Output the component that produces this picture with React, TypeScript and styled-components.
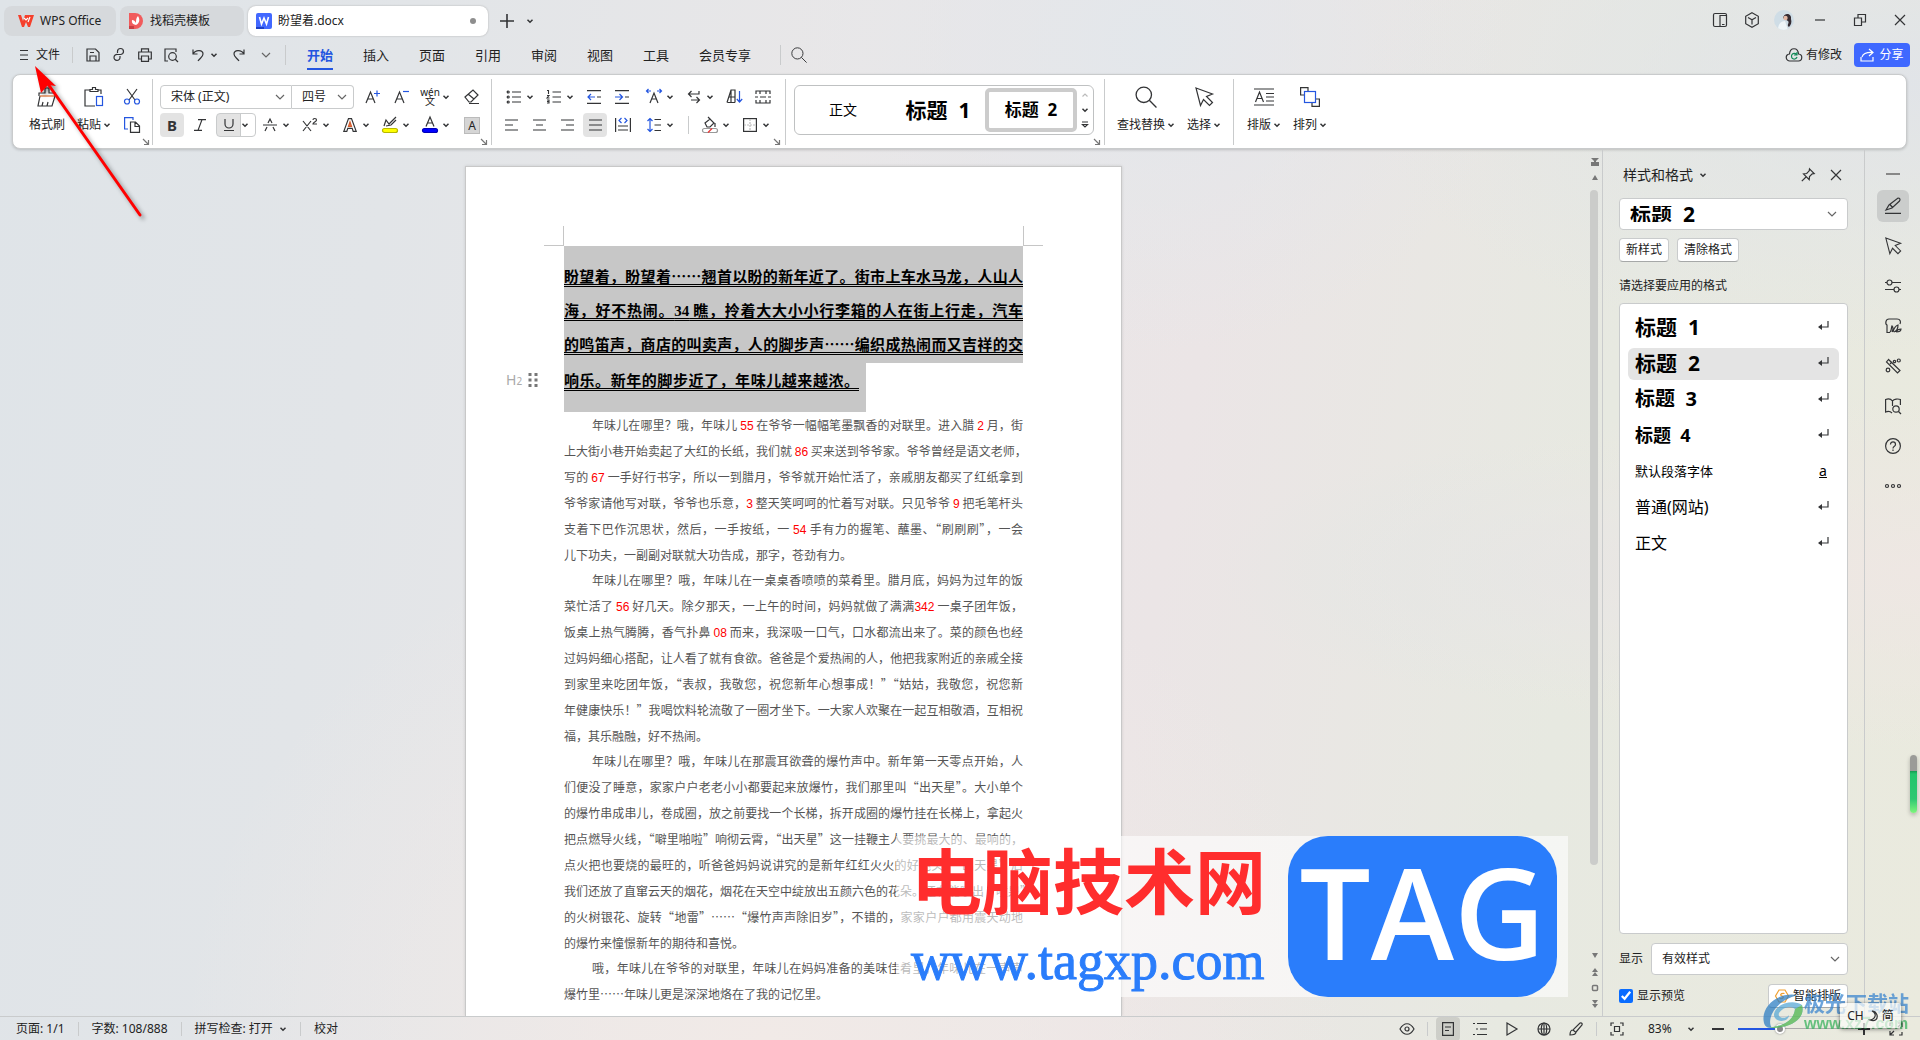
import React, { ReactNode } from "react";
import styled, { createGlobalStyle, css } from "styled-components";

const ui = `"Noto Sans", "Noto Sans CJK SC", sans-serif`;
const ink = "#333436";
const blue = "#2456e0";
const line = "#c9cbcc";

const Global = createGlobalStyle`
  * { box-sizing: border-box; }
  body { margin: 0; font-family: ${ui}; font-size: 12px; line-height: 16px; color: #222; }
  button, select, input { font: inherit; color: inherit; margin: 0; }
  button { border: 0; background: none; padding: 0; cursor: default; }
  p, h1, h2, ul { margin: 0; padding: 0; }
`;

/* ---------- icons ---------- */
const Svg = styled.svg<{ $w: number; $h: number }>`
  width: ${(p) => p.$w}px;
  height: ${(p) => p.$h}px;
  flex: none;
  display: block;
  fill: none;
  stroke: ${ink};
  stroke-width: 1.2;
  overflow: visible;
`;
type IcoProps = { children: ReactNode; w?: number; h?: number; box?: string };
const Ico = ({ children, w = 20, h = w, box }: IcoProps) => (
  <Svg $w={w} $h={h} viewBox={box ?? `0 0 ${w} ${h}`} aria-hidden="true">
    {children}
  </Svg>
);
const Chev = () => (
  <Ico w={8}>
    <path d="M1.5 2.8 4 5.2 6.5 2.8" strokeWidth="1.5" />
  </Ico>
);
const WideChev = () => (
  <Ico w={12}>
    <path d="M2 4l4 4 4-4" stroke="#666" />
  </Ico>
);
const Launch = () => (
  <Ico w={8}>
    <path d="M1 1l5 5M6.5 2v4.5H2" stroke="#777" />
  </Ico>
);
const X = () => (
  <Ico w={12}>
    <path d="M1 1l10 10M11 1 1 11" />
  </Ico>
);
const Cursor = ({ s = 20 }: { s?: number }) => (
  <Ico w={s} box="0 0 20 20">
    <path d="M2 1l16.500 6-6 2.500 6 6-3 3-6-6-3 6z" />
  </Ico>
);
const Search = ({ s = 16 }: { s?: number }) => (
  <Ico w={s} box="0 0 20 20">
    <circle cx="8" cy="8" r="7" />
    <path d="M13 13l6.500 6.500" />
  </Ico>
);
const Return = () => (
  <Ico w={12}>
    <path d="M11 0v6H2" />
    <path d="M5 3 1 6l4 3z" fill={ink} stroke="none" />
  </Ico>
);

/* ---------- shell ---------- */
const Shell = styled.div`
  height: 100vh;
  display: flex;
  flex-direction: column;
  overflow: hidden;
  position: relative;
  background:
    radial-gradient(ellipse at 100% 55%, #eee7e3 0, transparent 22%),
    radial-gradient(ellipse at 99% 8%, #e1e4e8 0, transparent 20%),
    radial-gradient(ellipse at 60% 4%, #e3e7eb 0, transparent 22%),
    radial-gradient(ellipse at 82% 55%, #e3e6e5 0, transparent 16%),
    radial-gradient(ellipse at 40% 100%, #f1eae7 0, transparent 36%),
    linear-gradient(100deg, #dfe4e8 0, #e2e5e8 20%, #e9e7e8 42%, #ebe5e6 60%, #e7e9e1 80%, #eaeade 100%);
`;
const TitleBar = styled.header`
  display: flex;
  height: 36px;
  padding: 6px 14px 0 4px;
  gap: 4px;
`;
const Tab = styled.button<{ $on?: boolean; $w: number }>`
  width: ${(p) => p.$w}px;
  height: 30px;
  border-radius: 8px;
  padding: 0 12px 0 8px;
  display: flex;
  align-items: center;
  gap: 6px;
  background: ${(p) => (p.$on ? "#fff" : "#d6d9dc")};
  box-shadow: ${(p) => (p.$on ? "0 0 2px #aaa" : "none")};
`;
const Dot = styled.i`
  width: 6px;
  height: 6px;
  border-radius: 3px;
  background: #8e8e8e;
  margin-left: auto;
`;
const Grow = styled.div`
  flex: 1;
`;
const Gap = styled.div<{ $w: number }>`
  width: ${(p) => p.$w}px;
  flex: none;
`;
const Cell = styled.button<{ $w?: number; $on?: boolean; $h?: number }>`
  width: ${(p) => p.$w ?? 24}px;
  height: ${(p) => p.$h ?? 24}px;
  flex: none;
  display: flex;
  align-items: center;
  justify-content: center;
  border-radius: 4px;
  background: ${(p) => (p.$on ? "rgba(0, 0, 0, 0.11)" : "none")};
`;
const Avatar = styled.span`
  width: 20px;
  height: 20px;
  border-radius: 10px;
  overflow: hidden;
  background: #cfdde6;
`;
const Divider = styled.i<{ $h: number; $m?: number }>`
  width: 1px;
  height: ${(p) => p.$h}px;
  margin: 0 ${(p) => p.$m ?? 0}px;
  background: ${line};
  flex: none;
`;
const MenuBar = styled.nav`
  height: 38px;
  display: flex;
  align-items: center;
  padding: 0 10px 0 18px;
`;
const FileBtn = styled.button`
  display: flex;
  align-items: center;
  gap: 6px;
  width: 54px;
`;
const MenuTab = styled.button<{ $on?: boolean }>`
  height: 28px;
  margin: 2px 15px 0;
  font-size: 13px;
  white-space: nowrap;
  border-bottom: 2px solid ${(p) => (p.$on ? blue : "transparent")};
  color: ${(p) => (p.$on ? blue : "#222")};
  font-weight: ${(p) => (p.$on ? 700 : 400)};
`;
const Changed = styled.button`
  display: flex;
  align-items: center;
  gap: 4px;
  margin-right: 12px;
`;
const Share = styled.button`
  display: flex;
  align-items: center;
  justify-content: center;
  gap: 5px;
  width: 56px;
  height: 24px;
  border-radius: 4px;
  background: #3f68ff;
  color: #fff;
`;

/* ---------- ribbon ---------- */
const Ribbon = styled.section`
  margin: 0 13px 0 12px;
  height: 75px;
  flex: none;
  background: #fff;
  border: 1px solid ${line};
  border-radius: 8px;
  box-shadow: 0 1px 3px rgba(0, 0, 0, 0.18);
  display: flex;
  align-items: center;
`;
const Group = styled.div<{ $l: number; $r?: number }>`
  display: flex;
  flex-direction: column;
  height: 73px;
  padding: 10px ${(p) => p.$r ?? 3}px 0 ${(p) => p.$l}px;
`;
const Rows = styled.div`
  display: grid;
  row-gap: 4px;
`;
const Row = styled.div`
  display: flex;
  height: 24px;
  align-items: center;
`;
const LaunchBtn = styled.button`
  align-self: flex-end;
  width: 8px;
  height: 8px;
  margin-top: 1px;
`;
const Big = styled.button<{ $w?: number }>`
  width: ${(p) => (p.$w ? p.$w + "px" : "auto")};
  display: grid;
  grid-template-rows: 24px 24px;
  row-gap: 4px;
  place-items: center;
  justify-content: center;
`;
const BigLabel = styled.span`
  display: flex;
  align-items: center;
  gap: 2px;
  white-space: nowrap;
`;
const BigRow = styled.div<{ $gap: number }>`
  display: flex;
  gap: ${(p) => p.$gap}px;
`;
const Split = styled.button<{ $box?: boolean }>`
  width: 40px;
  height: 24px;
  flex: none;
  display: flex;
  align-items: center;
  padding-left: 2px;
  ${(p) =>
    p.$box &&
    css`
      border: 1px solid ${line};
      border-radius: 4px;
      padding-left: 0;
      background: linear-gradient(90deg, #e3e3e3 23px, ${line} 23px, ${line} 24px, #fff 24px);
    `}
`;
const SplitFace = styled.span`
  width: 24px;
  display: flex;
  justify-content: center;
`;
const Drop = ({ children, label, box }: { children: ReactNode; label: string; box?: boolean }) => (
  <Split aria-label={label} $box={box}>
    <SplitFace>{children}</SplitFace>
    <Chev />
  </Split>
);
const Pick = styled.div<{ $w?: number; $h?: number; $join?: "l" | "r"; $end?: number }>`
  display: grid;
  align-items: center;
  width: ${(p) => (p.$w ? p.$w + "px" : "auto")};
  height: ${(p) => p.$h ?? 24}px;
  flex: ${(p) => (p.$w ? "none" : 1)};
  background: #fff;
  border: 1px solid ${line};
  border-radius: ${(p) => (p.$join === "l" ? "4px 0 0 4px" : p.$join === "r" ? "0 4px 4px 0" : "4px")};
  border-left-width: ${(p) => (p.$join === "r" ? 0 : 1)}px;
  > * {
    grid-area: 1 / 1;
  }
  > svg {
    justify-self: end;
    margin-right: ${(p) => p.$end ?? 5}px;
    pointer-events: none;
  }
`;
const Select = styled.select<{ $pad?: number; $big?: boolean }>`
  appearance: none;
  width: 100%;
  height: 100%;
  border: 0;
  background: none;
  padding: 0 20px 0 ${(p) => p.$pad ?? 10}px;
  font-size: ${(p) => (p.$big ? 21 : 12)}px;
  font-weight: ${(p) => (p.$big ? 700 : 400)};
  color: ${(p) => (p.$big ? "#000" : "#222")};
  white-space: pre;
`;
const Gallery = styled.div`
  width: 300px;
  height: 50px;
  margin-bottom: 2px;
  border: 1px solid #bfc1c2;
  border-radius: 6px;
  display: flex;
  align-items: center;
`;
const Style = styled.button<{ $w: number; $size: number; $on?: boolean; $bold?: boolean }>`
  width: ${(p) => p.$w}px;
  height: 44px;
  font-size: ${(p) => p.$size}px;
  font-weight: ${(p) => (p.$bold ? 700 : 400)};
  font-family: ${ui};
  color: #000;
  white-space: pre;
  line-height: 24px;
  border: 4px solid ${(p) => (p.$on ? "#ccc" : "transparent")};
  border-radius: 5px;
`;
const Spin = styled.div`
  flex: 1;
  display: grid;
  justify-items: center;
  gap: 8px;
`;

/* ---------- workspace ---------- */
const Work = styled.main`
  flex: 1;
  min-height: 0;
  display: flex;
`;
const Canvas = styled.div`
  flex: 1;
  min-width: 0;
  overflow: hidden;
  display: flex;
  flex-direction: column;
  align-items: center;
  padding: 17px 1px 0 0;
`;
const Page = styled.article`
  width: 657px;
  flex: 1;
  background: #fff;
  border: 1px solid #c8c8c8;
  border-bottom: 0;
  padding: 59px 98px 0;
  box-shadow: 0 0 3px rgba(0, 0, 0, 0.12);
  font-family: "Noto Sans CJK SC", sans-serif;
`;
const Corners = styled.div`
  display: flex;
  justify-content: space-between;
  margin: 0 -20px;
`;
const Corner = styled.i<{ $side: "left" | "right" }>`
  width: 20px;
  height: 20px;
  border: 0 solid #c6c6c6;
  border-bottom-width: 1px;
  border-${(p) => (p.$side === "left" ? "right" : "left")}-width: 1px;
`;
const Heading = styled.h1`
  font-size: 15px;
  line-height: 34px;
  font-weight: 700;
  color: #000;
`;
const Selected = styled.span<{ $tail?: boolean }>`
  display: block;
  position: relative;
  background: #c7c7c7;
  ${(p) =>
    p.$tail
      ? css`
          width: 302px;
          height: 49px;
          padding-right: 7px;
        `
      : css`
          padding: 13px 0 2px;
        `}
`;
const HLine = styled.span`
  display: block;
  white-space: nowrap;
  text-align: justify;
  text-align-last: justify;
  text-decoration: underline double 1px;
  text-decoration-skip-ink: none;
  text-underline-offset: 2px;
`;
const Handle = styled.span`
  position: absolute;
  left: -58px;
  top: 8px;
  display: flex;
  align-items: center;
  gap: 6px;
  font: 400 14px/18px ${ui};
  color: #aaa;
  sub {
    font-size: 10px;
    line-height: 1;
    vertical-align: baseline;
  }
`;
const Para = styled.p`
  font-size: 12px;
  line-height: 26px;
  color: #555;
  & + & {
    margin-top: -1px;
  }
`;
const PLine = styled.span<{ $first: boolean; $last: boolean }>`
  display: block;
  height: 26px;
  white-space: nowrap;
  padding-left: ${(p) => (p.$first ? 28 : 0)}px;
  text-align-last: ${(p) => (p.$last ? "left" : "justify")};
`;
const Num = styled.span<{ $serif?: boolean }>`
  font-family: ${(p) => (p.$serif ? `"Liberation Serif", serif` : `"Liberation Sans", sans-serif`)};
  color: ${(p) => (p.$serif ? "inherit" : "#f00")};
  line-height: 1;
`;
const ScrollCol = styled.div`
  width: 14px;
  display: flex;
  flex-direction: column;
  padding: 5px 0 4px;
`;
const Track = styled.div`
  flex: 1;
  padding: 4px 2px 0;
`;
const Thumb = styled.div`
  width: 8px;
  height: 89%;
  border-radius: 4px;
  background: #cbccca;
`;
const Panel = styled.aside`
  width: 262px;
  border-left: 1px solid ${line};
  padding: 0 16px 8px;
  display: flex;
  flex-direction: column;
`;
const PanelHead = styled.div`
  height: 49px;
  padding: 3px 0 0 4px;
  display: flex;
  align-items: center;
  gap: 6px;
  font-size: 14px;
`;
const PanelRow = styled.div<{ $gap: number; $top: number }>`
  display: flex;
  align-items: center;
  gap: ${(p) => p.$gap}px;
  margin-top: ${(p) => p.$top}px;
`;
const Plain = styled.button`
  height: 24px;
  padding: 0 6px;
  display: flex;
  align-items: center;
  gap: 4px;
  background: #fff;
  border: 1px solid ${line};
  border-bottom-color: #a6a8a8;
  border-radius: 4px;
  white-space: nowrap;
`;
const Hint = styled.p`
  padding: 16px 0 9px;
`;
const List = styled.ul`
  flex: 1;
  list-style: none;
  background: #fff;
  border: 1px solid ${line};
  border-radius: 4px;
  padding: 8px;
  display: flex;
  flex-direction: column;
  gap: 4px;
`;
const Entry = styled.button<{ $on?: boolean; $size: number; $bold?: boolean }>`
  width: 100%;
  height: 32px;
  padding: 0 10px 2px 7px;
  display: flex;
  align-items: center;
  justify-content: space-between;
  border-radius: 6px;
  background: ${(p) => (p.$on ? "#e4e4e4" : "none")};
  font-size: ${(p) => p.$size}px;
  font-weight: ${(p) => (p.$bold ? 700 : 400)};
  line-height: 28px;
  color: #000;
  white-space: pre;
`;
const CharMark = styled.span`
  width: 12px;
  font-size: 14px;
  text-align: center;
  text-decoration: underline;
`;
const Check = styled.label`
  display: flex;
  align-items: center;
  gap: 4px;
  flex: 1;
  input {
    width: 14px;
    height: 14px;
    accent-color: #0a6cff;
  }
`;
const Rail = styled.aside`
  width: 56px;
  border-left: 1px solid ${line};
  display: flex;
  flex-direction: column;
  align-items: center;
  gap: 8px;
  padding-top: 17px;
`;
const RailBtn = styled.button<{ $on?: boolean; $h?: number }>`
  width: 32px;
  height: ${(p) => p.$h ?? 32}px;
  border-radius: 6px;
  background: ${(p) => (p.$on ? "#cbcdcc" : "none")};
  display: grid;
  place-items: center;
`;

/* ---------- status bar ---------- */
const Status = styled.footer`
  height: 24px;
  border-top: 1px solid ${line};
  display: flex;
  align-items: center;
  padding: 0 12px 0 16px;
  white-space: nowrap;
`;
const StatusBtn = styled.button`
  display: flex;
  align-items: center;
  gap: 6px;
`;
const Zoom = styled.input`
  appearance: none;
  width: 114px;
  margin: 0 0 0 8px;
  height: 10px;
  background: linear-gradient(${blue}, ${blue}) 0 50% / 40px 2px no-repeat, linear-gradient(#aaa, #aaa) 0 50% / 100% 1px no-repeat;
  &::-webkit-slider-thumb {
    appearance: none;
    width: 10px;
    height: 10px;
    border-radius: 5px;
    background: #888;
    border: 2px solid #fff;
    box-shadow: 0 0 2px #777;
  }
`;
const Percent = styled.span`
  width: 26px;
  margin: 0 11px 0 19px;
`;

/* ---------- overlays ---------- */
const Arrow = styled.svg`
  position: absolute;
  left: 28px;
  top: 60px;
  width: 130px;
  height: 170px;
  pointer-events: none;
  filter: drop-shadow(3px 3px 2px rgba(0, 0, 0, 0.4));
`;
const Meter = styled.div`
  position: absolute;
  right: 3px;
  top: 755px;
  width: 7px;
  height: 58px;
  border-radius: 4px;
  background: linear-gradient(#9b9b98 16px, #159a52 16px, #22c56b 19px, #2ec872 44px, #7ef57c);
  box-shadow: 0 2px 4px rgba(0, 0, 0, 0.25);
`;
const SiteMark = styled.div`
  position: absolute;
  left: 896px;
  top: 836px;
  height: 161px;
  padding-right: 11px;
  display: flex;
  gap: 21px;
  background: rgba(255, 255, 255, 0.6);
  pointer-events: none;
`;
const SiteText = styled.div`
  padding-left: 15px;
  width: 371px;
  white-space: nowrap;
`;
const SiteName = styled.div`
  font: 700 71px/82px "Noto Sans CJK SC", sans-serif;
  color: #ff2d2d;
`;
const SiteUrl = styled.div`
  font: 400 54px/86px "Liberation Serif", serif;
  color: #2a7dfb;
  -webkit-text-stroke: 1px #2a7dfb;
`;
const Tag = styled.div`
  width: 269px;
  border-radius: 40px;
  background: #2a7dfb;
  color: #fff;
  font: 600 126px/150px "Open Sans", sans-serif;
  text-align: center;
`;
const Ime = styled.div`
  position: absolute;
  right: 19px;
  bottom: 12px;
  width: 61px;
  height: 25px;
  display: flex;
  align-items: center;
  justify-content: center;
  gap: 3px;
  background: rgba(252, 252, 250, 0.7);
  border-radius: 3px;
  box-shadow: 0 1px 4px rgba(0, 0, 0, 0.5);
`;
const Dl = styled.div`
  position: absolute;
  right: 11px;
  bottom: 7px;
  display: flex;
  align-items: center;
  opacity: 0.75;
  pointer-events: none;
  white-space: nowrap;
`;
const DlName = styled.div`
  font: 700 21px/26px "Noto Sans CJK SC", sans-serif;
  color: #3c86cf;
`;
const DlUrl = styled.div`
  font: 700 16px/18px "Liberation Sans", sans-serif;
  color: #3bb35f;
`;

/* ---------- content ---------- */
const headingLines = [
  "盼望着，盼望着……翘首以盼的新年近了。街市上车水马龙，人山人",
  "海，好不热闹。34 瞧，拎着大大小小行李箱的人在街上行走，汽车",
  "的鸣笛声，商店的叫卖声，人的脚步声……编织成热闹而又吉祥的交",
];
const paragraphs = [
  [
    "年味儿在哪里？哦，年味儿 55 在爷爷一幅幅笔墨飘香的对联里。进入腊 2 月，街",
    "上大街小巷开始卖起了大红的长纸，我们就 86 买来送到爷爷家。爷爷曾经是语文老师，",
    "写的 67 一手好行书字，所以一到腊月，爷爷就开始忙活了，亲戚朋友都买了红纸拿到",
    "爷爷家请他写对联，爷爷也乐意，3 整天笑呵呵的忙着写对联。只见爷爷 9 把毛笔杆头",
    "支着下巴作沉思状，然后，一手按纸，一 54 手有力的握笔、蘸墨、“刷刷刷”，一会",
    "儿下功夫，一副副对联就大功告成，那字，苍劲有力。",
  ],
  [
    "年味儿在哪里？哦，年味儿在一桌桌香喷喷的菜肴里。腊月底，妈妈为过年的饭",
    "菜忙活了 56 好几天。除夕那天，一上午的时间，妈妈就做了满满342 一桌子团年饭，",
    "饭桌上热气\u817e\u817e，香气扑鼻 08 而来，我深吸一口气，口水都流出来了。菜的颜色也经",
    "过妈妈细心搭配，让人看了就有食欲。爸爸是个爱热闹的人，他把我家附近的亲戚全接",
    "到家里来吃团年饭，“表叔，我敬您，祝您新年心想事成！”“姑姑，我敬您，祝您新",
    "年健康快乐！”我喝饮料轮流敬了一圈才坐下。一大家人欢聚在一起互相敬酒，互相祝",
    "福，其乐融融，好不热闹。",
  ],
  [
    "年味儿在哪里？哦，年味儿在那震耳欲聋的爆竹声中。新年第一天零点开始，人",
    "们便没了睡意，家家户户老老小小都要起来放爆竹，我们那里叫“出天星”。大小单个",
    "的爆竹串成串儿，卷成圈，放之前要找一个长梯，拆开成圈的爆竹挂在长梯上，拿起火",
    "把点燃导火线，“噼里啪啦”响彻云霄，“出天星”这一挂鞭主人要挑最大的、最响的，",
    "点火把也要烧的最旺的，听爸爸妈妈说讲究的是新年红红火火的好兆头。“出天星”后",
    "我们还放了直窜云天的烟花，烟花在天空中绽放出五颜六色的花朵。还有能喷出“喷泉”",
    "的火树银花、旋转“地雷”……“爆竹声声除旧岁”，不错的，家家户户都用震天动地",
    "的爆竹来憧憬新年的期待和喜悦。",
  ],
  ["哦，年味儿在爷爷的对联里，年味儿在妈妈准备的美味佳肴里，年味儿在一声声", "爆竹里……年味儿更是深深地烙在了我的记忆里。"],
];
const withNumbers = (t: string, serif = false) =>
  t.split(/(\d+)/).map((s, i) =>
    i % 2 ? (
      <Num key={i} $serif={serif}>
        {s}
      </Num>
    ) : (
      s
    )
  );

const styles: { name: string; size: number; bold?: boolean; mark?: string }[] = [
  { name: "标题  1", size: 21, bold: true },
  { name: "标题  2", size: 21, bold: true },
  { name: "标题  3", size: 20, bold: true },
  { name: "标题  4", size: 18, bold: true },
  { name: "默认段落字体", size: 13, mark: "a" },
  { name: "普通(网站)", size: 16 },
  { name: "正文", size: 16 },
];

const Glyph = styled.span`
  font-family: "Noto Sans", sans-serif;
  font-size: 15px;
  font-weight: 700;
  line-height: 18px;
  color: ${ink};
`;
const Pinyin = styled.span`
  display: grid;
  justify-items: center;
  font-size: 10px;
  line-height: 9px;
`;
const Shade = styled.span`
  width: 16px;
  height: 17px;
  display: grid;
  place-items: center;
  background: #d5d5d5;
  border: 1px solid #bbb;
  font-size: 12px;
`;

const align: [string, string, string][] = [
  ["左对齐", "M0 1h13M0 6h8M0 11h13", "l"],
  ["居中", "M0 1h13M3 6h7M0 11h13", "c"],
  ["右对齐", "M0 1h13M5 6h8M0 11h13", "r"],
  ["两端对齐", "M0 1h13M0 6h13M0 11h13", "j"],
];

const Centre = styled.span`
  width: 28px;
  display: flex;
  justify-content: center;
`;

function ClipboardGroup() {
  return (
    <Group $l={13} $r={2}>
      <BigRow $gap={5}>
        <Big $w={42}>
          <Ico>
            <path d="M2 9V6h6V1h4v5h6v3M3 9 1 19h14l3-10M5 19l1-4M10 19l1-4" />
            <path d="M3 9h14" stroke="#e2702e" />
          </Ico>
          <BigLabel>格式刷</BigLabel>
        </Big>
        <Big $w={42}>
          <Ico>
            <path d="M6 3H1v16h10M14 3h3v4M6 4.500V2.500h2.500v-2h3v2H14v2z" />
            <rect x="12.500" y="9.500" width="6" height="9" stroke={blue} />
          </Ico>
          <BigLabel>
            粘贴
            <Chev />
          </BigLabel>
        </Big>
        <Rows>
          <Cell aria-label="剪切">
            <Ico w={16}>
              <path d="M3 0l8 11M13 0 5 11" />
              <circle cx="3" cy="12.500" r="2.500" stroke={blue} />
              <circle cx="13" cy="12.500" r="2.500" stroke={blue} />
            </Ico>
          </Cell>
          <Cell aria-label="复制">
            <Ico w={16}>
              <path d="M6.500 5h5l4 4v6.400h-9zM11 5v4.500h4" />
              <path d="M4 12H.6V.6H9V3" stroke={blue} />
            </Ico>
          </Cell>
        </Rows>
        <Gap $w={1} />
      </BigRow>
      <LaunchBtn aria-label="剪贴板选项">
        <Launch />
      </LaunchBtn>
    </Group>
  );
}

export default function App() {
  return (
    <Shell>
      <Global />
      <TitleBar>
        <Tab $w={112}>
          <Gap $w={0} />
          <Ico w={16}>
            <path d="M0 2h3l2 6 2-6h9l-4 12h-2L8 9l-2 5H4z" fill="#f5402c" stroke="none" />
            <path d="M6 5l2 2 2-2M10 9l2-5" stroke="#fff" strokeWidth="1.200" />
          </Ico>
          WPS Office
        </Tab>
        <Tab $w={124}>
          <Ico w={16}>
            <path d="M1 0h6a8 8 0 0 1 0 16H1z" fill="#f15b5c" stroke="none" />
            <path d="M1 13h5v3H1z" fill="#c93e43" stroke="none" />
            <path d="M8 12c-5-1-4-4-4-5 2 0 3 1 4 3 0-3 0-5 2-7 2 3 2 7-2 9z" fill="#fff" stroke="none" />
          </Ico>
          找稻壳模板
        </Tab>
        <Tab $w={240} $on>
          <Ico w={16}>
            <rect width="16" height="16" rx="2" fill="#4268ff" stroke="none" />
            <path d="M0 14h8v2H0z" fill="#1d3fc4" stroke="none" />
            <path d="M3.500 4l2 7L8 5l2.500 6 2-7" stroke="#fff" strokeWidth="1.600" />
          </Ico>
          盼望着.docx
          <Dot />
        </Tab>
        <Cell $w={30} $h={30} aria-label="新建">
          <Ico w={14}>
            <path d="M7 0v14M0 7h14" strokeWidth="1.600" />
          </Ico>
        </Cell>
        <Cell $w={8} $h={30} aria-label="标签列表">
          <Chev />
        </Cell>
        <Grow />
        <Cell $w={28} $h={28} aria-label="侧栏">
          <Ico w={14}>
            <rect x="0.5" y="0.5" width="13" height="13" rx="1.500" />
            <path d="M7 14V2.500h6.500M9 11.500h2.500" />
          </Ico>
        </Cell>
        <Cell $w={28} $h={28} aria-label="应用">
          <Ico w={14} h={16}>
            <path d="M7 .8l6.300 3.500v7.400L7 15.200.7 11.700V4.300zM3 5.500l4 2.300 4-2.300M7 8v4.500" />
          </Ico>
        </Cell>
        <Cell $w={28} $h={28} aria-label="账户">
          <Avatar>
            <Ico>
              <path d="M4 20c0-6 3-9 7-9l3 9z" fill="#eff5f8" stroke="none" />
              <path d="M9 8c1-6 9-5 8 1 1 3 0 6-2 8-3-2 1-4-1-6z" fill="#352c33" stroke="none" />
              <circle cx="11.500" cy="8" r="2.200" fill="#e4b9a6" stroke="none" />
            </Ico>
          </Avatar>
        </Cell>
        <Cell $w={36} $h={28} aria-label="最小化">
          <Ico w={10}>
            <path d="M0 5h10" />
          </Ico>
        </Cell>
        <Cell $w={36} $h={28} aria-label="还原">
          <Ico w={12}>
            <path d="M.5 4h7v7.500h-7zM4 4V.5h7.500V8H7.500" />
          </Ico>
        </Cell>
        <Gap $w={8} />
        <Cell $w={12} $h={28} aria-label="关闭">
          <X />
        </Cell>
      </TitleBar>

      <MenuBar>
        <FileBtn>
          <Ico w={12}>
            <path d="M2 1.500h8M2 6h8M2 10.500h8" />
          </Ico>
          文件
        </FileBtn>
        <Divider $h={16} />
        <Gap $w={7} />
        <Cell $w={26} aria-label="保存">
          <Ico w={14}>
            <path d="M1 1h8.500L13 4.500V13H1zM4 13V8h6v5M4 4.500h4" />
          </Ico>
        </Cell>
        <Cell $w={26} aria-label="输出">
          <Ico w={14}>
            <path d="M5.500 5V3.500a3 3 0 1 1 3 3h-3a3 3 0 1 0 2.500 3V8" />
          </Ico>
        </Cell>
        <Cell $w={26} aria-label="打印">
          <Ico w={14}>
            <path d="M3.500 4V.8h7V4M3.500 11H.7V4h12.600v7h-2.800M3.500 8h7v5.300h-7z" />
          </Ico>
        </Cell>
        <Cell $w={26} aria-label="打印预览">
          <Ico w={14}>
            <path d="M4 13H1V1h11v3" />
            <circle cx="8.500" cy="8.500" r="3.800" />
            <path d="M11 11l3 3" />
          </Ico>
        </Cell>
        <Drop label="撤销">
          <Ico w={14}>
            <path d="M2 1.500V6h4.500M2 6c3-5 10-4 10 0 0 3-3 4-5 7" />
          </Ico>
        </Drop>
        <Cell $w={30} aria-label="恢复">
          <Ico w={14}>
            <path d="M12 1.500V6H7.500M12 6C9 1 2 2 2 6c0 3 3 4 5 7" />
          </Ico>
        </Cell>
        <Cell $w={24} aria-label="更多">
          <WideChev />
        </Cell>
        <Gap $w={7} />
        <Divider $h={20} />
        <Gap $w={6} />
        {["开始", "插入", "页面", "引用", "审阅", "视图", "工具", "会员专享"].map((t) => (
          <MenuTab key={t} $on={t === "开始"}>
            {t}
          </MenuTab>
        ))}
        <Gap $w={14} />
        <Divider $h={20} />
        <Gap $w={6} />
        <Cell aria-label="搜索">
          <Search />
        </Cell>
        <Grow />
        <Changed>
          <Ico w={16}>
            <path d="M4 14a3.500 3.500 0 0 1-.5-7C4 0 12 0 12.500 7a3.500 3.500 0 0 1-.5 7z" />
            <path d="M10.500 7.500A2.800 2.800 0 1 0 11 10M11 5v3H8" stroke="#128a58" />
          </Ico>
          有修改
        </Changed>
        <Share>
          <Ico w={14}>
            <path d="M9 1l4 3.500L9 8M13 4.500C6 4 3 6 2 9M1 9v4h12V9" stroke="#fff" />
          </Ico>
          分享
        </Share>
      </MenuBar>

      <Ribbon>
        <ClipboardGroup />
        <Divider $h={66} />

        <Group $l={7}>
          <Rows>
            <Row>
              <Pick $w={132} $join="l">
                <Select aria-label="字体">
                  <option>宋体 (正文)</option>
                </Select>
                <WideChev />
              </Pick>
              <Pick $w={62} $join="r">
                <Select aria-label="字号">
                  <option>四号</option>
                </Select>
                <WideChev />
              </Pick>
              <Gap $w={4} />
              <Cell $w={29} aria-label="增大字号">
                <Ico w={14}>
                  <path d="M0 13 4.500 2 9 13M1.500 9h6" />
                  <path d="M8 3.500h6M11 .5v6" stroke={blue} />
                </Ico>
              </Cell>
              <Cell $w={29} aria-label="减小字号">
                <Ico w={14}>
                  <path d="M0 13 4.500 2 9 13M1.500 9h6" />
                  <path d="M8 1.500h6" stroke={blue} />
                </Ico>
              </Cell>
              <Drop label="拼音指南">
                <Pinyin>
                  <span>wén</span>
                  <span>文</span>
                </Pinyin>
              </Drop>
              <Cell $w={32} aria-label="清除格式">
                <Ico w={16}>
                  <path d="M1 8l8-7 5 5-7 7H5zM4 5l6 5M5 14.500h10" />
                </Ico>
              </Cell>
            </Row>
            <Row>
              <Cell $on aria-label="加粗">
                <Glyph>B</Glyph>
              </Cell>
              <Cell $w={32} aria-label="倾斜">
                <Ico w={12}>
                  <path d="M4 .6h8M0 11.400h8M8 .6 4 11.400" />
                </Ico>
              </Cell>
              <Drop label="下划线" box>
                <Ico w={12}>
                  <path d="M2 0v5a4 4 0 0 0 8 0V0M1 11.500h10" />
                </Ico>
              </Drop>
              <Drop label="删除线">
                <Ico w={14}>
                  <path d="M5 5l2-4 2 4M4 9l-2 4M10 9l2 4M0 7h14" />
                </Ico>
              </Drop>
              <Drop label="上标">
                <Ico w={14}>
                  <path d="M0 3l8 10M8 3 0 13M10 2c0-2 3.500-2 3.500 0S10 4 10 6h4" />
                </Ico>
              </Drop>
              <Drop label="文字效果">
                <Ico w={14}>
                  <path d="M.8 13.400 5.500 .6h3l4.700 12.800h-3l-1-3H4.800l-1 3z" />
                  <path d="M5.500 8.500 7 4l1.500 4.500z" fill="#f08050" stroke="#d05a2c" />
                </Ico>
              </Drop>
              <Drop label="突出显示">
                <Ico w={16}>
                  <path d="M2 9l2-6 3 4 7-7M4 9l5-1 5-5" />
                  <rect x="0.5" y="11.500" width="15" height="4" rx="2" fill="#ffff00" stroke="#b8b800" />
                </Ico>
              </Drop>
              <Drop label="字体颜色">
                <Ico w={16}>
                  <path d="M4 9.500 8 0l4 9.500M5.500 6h5" />
                  <rect x="0.5" y="11.500" width="15" height="4" rx="2" fill="#0000ff" stroke="#0000b8" />
                </Ico>
              </Drop>
              <Cell $w={32} aria-label="字符底纹">
                <Shade>A</Shade>
              </Cell>
            </Row>
          </Rows>
          <LaunchBtn aria-label="字体选项">
            <Launch />
          </LaunchBtn>
        </Group>
        <Divider $h={66} />

        <Group $l={5} $r={4}>
          <Rows>
            <Row>
              <Gap $w={3} />
              <Drop label="项目符号">
                <Ico w={14}>
                  <path d="M5 2h9M5 7h9M5 12h9" />
                  <circle cx="1.200" cy="2" r="1" />
                  <circle cx="1.200" cy="7" r="1" />
                  <circle cx="1.200" cy="12" r="1" />
                </Ico>
              </Drop>
              <Drop label="编号">
                <Ico w={14}>
                  <path d="M5.500 2H14M5.500 7H14M5.500 12H14M0 .5h1.500V4M0 5.500h2L0 8h2.500M0 10h2v1.500H0M2 11.500V13H0" strokeWidth="1.100" />
                </Ico>
              </Drop>
              <Cell $w={28} aria-label="减少缩进">
                <Ico w={14}>
                  <path d="M0 .6h14M10 7h4M0 13.400h14" />
                  <path d="M4 4 1 7l3 3M1 7h7" stroke={blue} />
                </Ico>
              </Cell>
              <Cell $w={28} aria-label="增加缩进">
                <Ico w={14}>
                  <path d="M0 .6h14M10 7h4M0 13.400h14" />
                  <path d="M4.500 4l3 3-3 3M0 7h7" stroke={blue} />
                </Ico>
              </Cell>
              <Gap $w={4} />
              <Drop label="中文版式">
                <Ico w={16}>
                  <path d="M4 14 8 4l4 10M5.500 10h5" />
                  <path d="M0 2h5M11 2h5M2.500 0 .5 2l2 2M13.500 0l2 2-2 2" stroke={blue} />
                </Ico>
              </Drop>
              <Drop label="文字方向">
                <Ico w={14}>
                  <path d="M4.500 1l-3 3 3 3M1.500 4H12V1M9.500 7l3 3-3 3M12.500 10H4" />
                </Ico>
              </Drop>
              <Gap $w={1} />
              <Cell $w={28} aria-label="排序">
                <Ico w={16}>
                  <path d="M0 13.500 4 1h4v12.500M2 8h6M.5 13.500H8M4 1v12" />
                  <path d="M12.500 2v11M9.800 10l2.700 3 2.700-3" stroke={blue} />
                </Ico>
              </Cell>
              <Cell $w={28} aria-label="表格">
                <Ico w={16} h={14}>
                  <path d="M1 4V1h14v3M1 10v3h14v-3M0 7h3M5 7h6M13 7h3M5 1v3M11 1v3M5 10v3M11 10v3" />
                </Ico>
              </Cell>
            </Row>
            <Row>
              {align.map(([label, d, k]) => (
                <Centre key={k}>
                  <Cell $on={k === "j"} aria-label={label}>
                    <Ico w={13} h={12}>
                      <path d={d} />
                    </Ico>
                  </Cell>
                </Centre>
              ))}
              <Cell $w={28} aria-label="分散对齐">
                <Ico w={16}>
                  <path d="M.6 1v14M15.400 1v14M3 9h10M3 13h10" />
                  <path d="M6.500 1 4 3.500 6.500 6M9.500 1 12 3.500 9.500 6" stroke={blue} />
                </Ico>
              </Cell>
              <Gap $w={3} />
              <Drop label="行距">
                <Ico w={14}>
                  <path d="M7.500 1.500H14M7.500 7H14M7.500 12.500H14" />
                  <path d="M3 0v14M.5 3 3 .5 5.500 3M.5 11 3 13.500 5.500 11" stroke={blue} />
                </Ico>
              </Drop>
              <Gap $w={8} />
              <Divider $h={18} />
              <Gap $w={7} />
              <Drop label="底纹">
                <Ico w={16}>
                  <path d="M3 6l5-4 4 4-4 4H5zM6 0l3 3M13 6v4" />
                  <rect x="0.5" y="11.500" width="15" height="4" rx="2" stroke="#999" />
                  <path d="M6 15.500l4-4" stroke="#e33" />
                </Ico>
              </Drop>
              <Drop label="边框">
                <Ico w={14}>
                  <rect x=".6" y=".6" width="12.800" height="12.800" />
                  <path d="M7 1v12M1 7h12" stroke="#bbb" strokeDasharray="2 1" />
                </Ico>
              </Drop>
              <Gap $w={5} />
            </Row>
          </Rows>
          <LaunchBtn aria-label="段落选项">
            <Launch />
          </LaunchBtn>
        </Group>
        <Divider $h={66} />

        <Group $l={8}>
          <BigRow $gap={6}>
            <Gallery>
              <Style $w={96} $size={14}>
                正文
              </Style>
              <Style $w={94} $size={21} $bold>
                {"标题  1"}
              </Style>
              <Style $w={92} $size={17} $bold $on>
                {"标题  2"}
              </Style>
              <Spin>
                <Ico w={8} h={6}>
                  <path d="M1.500 4.500 4 2l2.500 2.500" stroke="#bbb" />
                </Ico>
                <Chev />
                <Ico w={8} h={6}>
                  <path d="M1 0h6M1.500 2.500 4 5l2.500-2.500z" />
                </Ico>
              </Spin>
            </Gallery>
            <Gap $w={1} />
          </BigRow>
          <LaunchBtn aria-label="样式选项">
            <Launch />
          </LaunchBtn>
        </Group>
        <Divider $h={66} />

        <Group $l={12} $r={12}>
          <BigRow $gap={12}>
            <Big>
              <Search s={22} />
              <BigLabel>
                查找替换
                <Chev />
              </BigLabel>
            </Big>
            <Big>
              <Cursor />
              <BigLabel>
                选择
                <Chev />
              </BigLabel>
            </Big>
          </BigRow>
        </Group>
        <Divider $h={66} />
        <Group $l={13}>
          <BigRow $gap={12}>
            <Big>
              <Ico>
                <path d="M0 2h20M0 18h20M12 6.500h8M12 10h8M12 14h8M1.500 15 5.500 5l4 10M3 11.500h5" />
              </Ico>
              <BigLabel>
                排版
                <Chev />
              </BigLabel>
            </Big>
            <Big>
              <Ico>
                <path d="M4 8H.6V.6H8V4M16 12h3.400v7.400H12V16" />
                <rect x="4.500" y="4.500" width="11" height="11" stroke={blue} />
              </Ico>
              <BigLabel>
                排列
                <Chev />
              </BigLabel>
            </Big>
          </BigRow>
        </Group>
      </Ribbon>

      <Work>
        <Canvas>
          <Page lang="zh-CN">
            <Corners>
              <Corner $side="left" />
              <Corner $side="right" />
            </Corners>
            <Heading>
              <Selected>
                {headingLines.map((t) => (
                  <HLine key={t}>{withNumbers(t, true)}</HLine>
                ))}
              </Selected>
              <Selected $tail>
                <Handle>
                  <span>
                    H<sub>2</sub>
                  </span>
                  <Ico w={10} h={16}>
                    <path d="M2 1v14M8 1v14" stroke="#777" strokeWidth="3" strokeDasharray="3 2.500" />
                  </Ico>
                </Handle>
                <HLine>响乐。新年的脚步近了，年味儿越来越浓。</HLine>
              </Selected>
            </Heading>
            {paragraphs.map((lines, i) => (
              <Para key={i}>
                {lines.map((t, j) => (
                  <PLine key={j} $first={j === 0} $last={j === lines.length - 1}>
                    {withNumbers(t)}
                  </PLine>
                ))}
              </Para>
            ))}
          </Page>
        </Canvas>
        <ScrollCol>
          <Cell $w={14} $h={16} aria-label="标尺">
            <Ico w={8}>
              <path d="M0 0h8L5 3v1h3v4H0V4h3V3z" fill="#777" stroke="none" />
            </Ico>
          </Cell>
          <Cell $w={14} $h={16} aria-label="向上滚动">
            <Ico w={6}>
              <path d="M3 0l3 5H0z" fill="#777" stroke="none" />
            </Ico>
          </Cell>
          <Track>
            <Thumb />
          </Track>
          <Cell $w={14} $h={16} aria-label="向下滚动">
            <Ico w={6}>
              <path d="M3 5l3-5H0z" fill="#777" stroke="none" />
            </Ico>
          </Cell>
          <Cell $w={14} $h={16} aria-label="上一页">
            <Ico w={6} h={8}>
              <path d="M3 0l3 4H0zM3 4l3 4H0z" fill="#777" stroke="none" />
            </Ico>
          </Cell>
          <Cell $w={14} $h={16} aria-label="选择浏览对象">
            <Ico w={6}>
              <rect x=".5" y=".5" width="5" height="5" rx="1" stroke="#777" strokeWidth="1.500" />
            </Ico>
          </Cell>
          <Cell $w={14} $h={16} aria-label="下一页">
            <Ico w={6} h={8}>
              <path d="M3 4l3-4H0zM3 8l3-4H0z" fill="#777" stroke="none" />
            </Ico>
          </Cell>
        </ScrollCol>

        <Panel>
          <PanelHead>
            样式和格式
            <Chev />
            <Grow />
            <Cell $w={20} aria-label="固定">
              <Ico w={14}>
                <path d="M8.500.8l4.700 4.700-2 .3L8.500 8.500l-.3 3.200L2.500 6l3.200-.5L8.200 2.800zM5 9 .8 13.200" />
              </Ico>
            </Cell>
            <Cell $w={24} aria-label="关闭窗格">
              <X />
            </Cell>
          </PanelHead>
          <PanelRow $gap={0} $top={0}>
            <Pick $h={32} $end={9}>
              <Select aria-label="当前样式" $big>
                <option>{"标题\u00a0\u00a02"}</option>
              </Select>
              <WideChev />
            </Pick>
          </PanelRow>
          <PanelRow $gap={8} $top={8}>
            <Plain>新样式</Plain>
            <Plain>清除格式</Plain>
          </PanelRow>
          <Hint>请选择要应用的格式</Hint>
          <List>
            {styles.map((s) => (
              <li key={s.name}>
                <Entry $size={s.size} $bold={s.bold} $on={s.name === "标题  2"}>
                  {s.name}
                  {s.mark ? <CharMark>{s.mark}</CharMark> : <Return />}
                </Entry>
              </li>
            ))}
          </List>
          <PanelRow $gap={8} $top={9}>
            <label htmlFor="show">显示</label>
            <Pick $h={32} $end={6}>
              <Select id="show">
                <option>有效样式</option>
              </Select>
              <WideChev />
            </Pick>
          </PanelRow>
          <PanelRow $gap={8} $top={9}>
            <Check>
              <input type="checkbox" defaultChecked />
              显示预览
            </Check>
            <Plain>
              <Ico w={14}>
                <path d="M4 1h6l3.500 6L10 13H4L.5 7zM9.500 4.500C5 4 5 6.500 7 7s2 3-2.500 2.500" stroke="#f0a030" />
              </Ico>
              智能排版
            </Plain>
          </PanelRow>
        </Panel>

        <Rail>
          <RailBtn $h={16} aria-label="收起">
            <Ico w={14} h={2}>
              <path d="M0 1h14" stroke="#888" strokeWidth="2" />
            </Ico>
          </RailBtn>
          <RailBtn $on aria-label="样式">
            <Ico w={16}>
              <path d="M1 12l3-5 9-7c2 0 2.500 1.500 1.500 3L7 10zM5 6.500l2.500 3M0 15.400h16" />
            </Ico>
          </RailBtn>
          <RailBtn aria-label="选择">
            <Cursor s={18} />
          </RailBtn>
          <RailBtn aria-label="属性">
            <Ico w={16}>
              <path d="M0 4.500h2M7 4.500h9M0 11.500h9M14 11.500h2" />
              <circle cx="4.500" cy="4.500" r="2.500" />
              <circle cx="11.500" cy="11.500" r="2.500" />
            </Ico>
          </RailBtn>
          <RailBtn aria-label="素材">
            <Ico w={16}>
              <path d="M5 14.500H2V7C0 6 .5 1 4 1h8c3.500 0 4 3 3 5M5 14c2-2 1-4 2-6 2 2 1 4 0 6M8 14c1-4 2-6 5-7 0 4-1 6-4 7M11 14c1-2 3-3 5-3 0 2-2 3-5 3" />
            </Ico>
          </RailBtn>
          <RailBtn aria-label="工具">
            <Ico w={16}>
              <path d="M3.500 1.500 1.500 4l11 11 2.500-2.500zM5 6l2-2" />
              <circle cx="3" cy="12" r="1.800" />
              <circle cx="9.500" cy="3.500" r="1.200" />
              <circle cx="13.800" cy="2.500" r="1.500" />
            </Ico>
          </RailBtn>
          <RailBtn aria-label="查阅">
            <Ico w={16}>
              <path d="M7 15c-2-2-4-2-6.400-1V1.500C3 .5 6 1 7.500 3 9 1 13 .5 15.400 1.500V7M7.500 3v5" />
              <circle cx="11" cy="11" r="3.200" />
              <path d="M13.500 13.500 16 16" />
            </Ico>
          </RailBtn>
          <RailBtn aria-label="帮助">
            <Ico w={16}>
              <circle cx="8" cy="8" r="7.400" />
              <path d="M5.500 6.500c0-3.500 5-3.500 5 0 0 2-2.500 1.500-2.500 4M8 11.500V13" />
            </Ico>
          </RailBtn>
          <RailBtn aria-label="更多">
            <Ico w={16} h={4}>
              <circle cx="2" cy="2" r="1.500" />
              <circle cx="8" cy="2" r="1.500" />
              <circle cx="14" cy="2" r="1.500" />
            </Ico>
          </RailBtn>
        </Rail>
      </Work>

      <Status>
        <span>页面: 1/1</span>
        <Divider $h={14} $m={13} />
        <span>字数: 108/888</span>
        <Divider $h={14} $m={13} />
        <StatusBtn>
          拼写检查: 打开
          <Chev />
        </StatusBtn>
        <Divider $h={14} $m={13} />
        <StatusBtn>校对</StatusBtn>
        <Grow />
        <Cell aria-label="护眼模式">
          <Ico w={14}>
            <path d="M0 7c4-7 10-7 14 0-4 7-10 7-14 0z" />
            <circle cx="7" cy="7" r="2" />
          </Ico>
        </Cell>
        <Divider $h={14} $m={8} />
        <Cell $on aria-label="页面视图">
          <Ico w={12} h={14}>
            <path d="M.6.6h10.800v12.800H.6zM3 5h6M3 8.500h4" />
          </Ico>
        </Cell>
        <Gap $w={8} />
        <Cell aria-label="大纲">
          <Ico w={14}>
            <path d="M0 1.500h2M4 1.500h10M3 7h2M7 7h7M0 12.500h2M4 12.500h10" />
          </Ico>
        </Cell>
        <Gap $w={8} />
        <Cell aria-label="阅读版式">
          <Ico w={12} h={14}>
            <path d="M1 1l10 6-10 6z" />
          </Ico>
        </Cell>
        <Gap $w={8} />
        <Cell aria-label="Web版式">
          <Ico w={14}>
            <circle cx="7" cy="7" r="6" />
            <ellipse cx="7" cy="7" rx="2.700" ry="6" />
            <path d="M1 7h12M7 1v12" />
          </Ico>
        </Cell>
        <Gap $w={8} />
        <Cell aria-label="写作模式">
          <Ico w={14}>
            <path d="M1 13c0-3 1-5 3-5l7-7c2-.5 2.500 1 2 2L7 10c0 2-3 3-6 3zM4 8l3 2.500" />
          </Ico>
        </Cell>
        <Divider $h={14} $m={8} />
        <Cell aria-label="适合页面">
          <Ico w={14}>
            <path d="M1 4V1h3M10 1h3v3M13 10v3h-3M4 13H1v-3M4.500 4.500h5v5h-5z" />
          </Ico>
        </Cell>
        <Percent>83%</Percent>
        <Cell $w={12} aria-label="缩放比例">
          <Chev />
        </Cell>
        <Gap $w={9} />
        <Cell aria-label="缩小">
          <Ico w={12} h={2}>
            <path d="M0 1h12" strokeWidth="2" />
          </Ico>
        </Cell>
        <Zoom type="range" aria-label="缩放" defaultValue={36} />
        <Cell aria-label="放大">
          <Ico w={12}>
            <path d="M0 6h12M6 0v12" strokeWidth="2" />
          </Ico>
        </Cell>
        <Gap $w={8} />
        <Cell aria-label="全屏">
          <Ico w={14}>
            <path d="M9 1h4v4M5 13H1V9M1 13l4-4M13 1 9 5M10 13h3v-3M4 1H1v3" />
          </Ico>
        </Cell>
      </Status>

      <SiteMark>
        <SiteText>
          <SiteName>电脑技术网</SiteName>
          <SiteUrl>www.tagxp.com</SiteUrl>
        </SiteText>
        <Tag>TAG</Tag>
      </SiteMark>
      <Meter />
      <Dl>
        <Ico w={42} h={40}>
          <path d="M36 4C16 0-2 16 2 32c1 4 4 5 8 5-6-8 2-27 26-33z" fill="#2f7fc4" stroke="none" />
          <path d="M40 14c4 14-12 24-34 23 16-2 26-8 27-19-4-4-12-2-16 4-2 6 8 6 10 2 0 8-16 8-15-1C14 12 32 8 40 14z" fill="#5aa9d6" stroke="none" />
          <path d="M40 14c4 14-12 24-34 23 16-2 26-8 27-19z" fill="#4fb64f" stroke="none" />
        </Ico>
        <div>
          <DlName>极光下载站</DlName>
          <DlUrl>www.xz7.com</DlUrl>
        </div>
      </Dl>
      <Ime>
        CH
        <Ico w={12}>
          <path d="M5 1c5 2 4 8-2 9 5 2 8-1 7-5-1-3-3-4-5-4z" />
        </Ico>
        简
      </Ime>
      <Arrow viewBox="0 0 130 170" aria-hidden="true">
        <path d="M20 24 112 155" stroke="#f00" strokeWidth="3" strokeLinecap="round" />
        <path d="M7 6l21 20-8-1-7 8z" fill="#f00" />
      </Arrow>
    </Shell>
  );
}
